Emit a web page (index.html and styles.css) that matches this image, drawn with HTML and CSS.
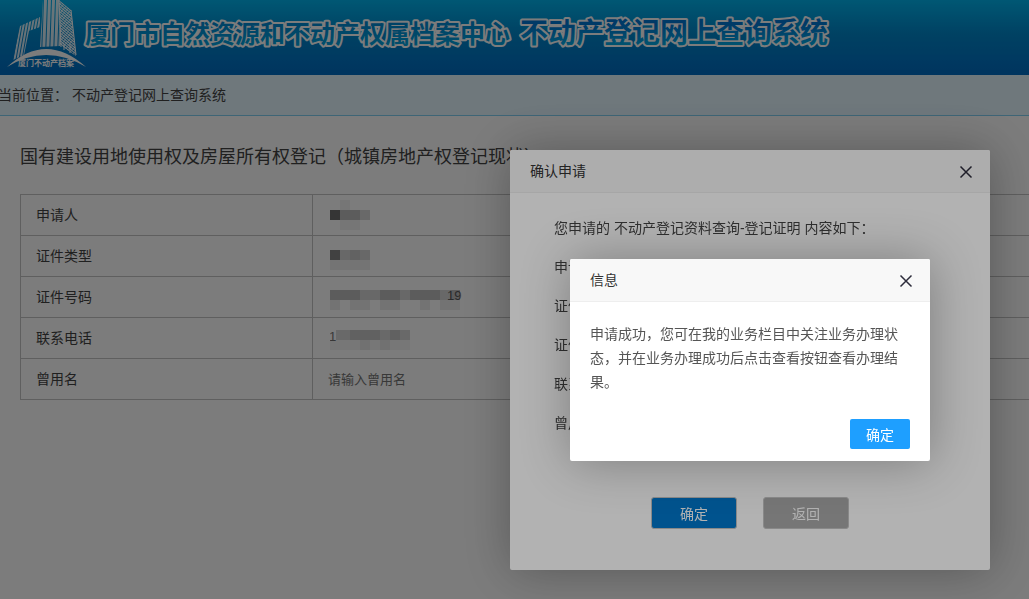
FILE: index.html
```html
<!DOCTYPE html>
<html lang="zh-CN">
<head>
  <meta charset="UTF-8">
  <meta name="viewport" content="width=device-width, initial-scale=1">
  <title>不动产登记网上查询系统</title>
  <link rel="stylesheet" href="styles.css">
</head>
<body>
<header class="header">
  <svg class="logo" width="840" height="75" viewBox="0 0 840 75">
    <defs>
      <pattern id="stripe" width="3" height="4" patternUnits="userSpaceOnUse" patternTransform="skewX(-10)">
        <rect width="2" height="4" fill="#fff" opacity=".85"/>
      </pattern>
      <pattern id="tower" width="4" height="4" patternUnits="userSpaceOnUse" patternTransform="skewX(-2)">
        <rect width="3" height="4" fill="#fff" opacity=".85"/>
      </pattern>
      <pattern id="hatch" width="3" height="2" patternUnits="userSpaceOnUse" patternTransform="rotate(40)">
        <rect width="3" height="1" fill="#fff"/>
        <rect width="1" height="2" fill="#fff" opacity=".6"/>
      </pattern>
      <linearGradient id="fillA" x1="0" y1="0" x2="0" y2="1">
        <stop offset="0" stop-color="#0085d0"/>
        <stop offset="1" stop-color="#00a5e0"/>
      </linearGradient>
      <linearGradient id="fillB" x1="0" y1="0" x2="0" y2="1">
        <stop offset="0.2" stop-color="#0078d4"/>
        <stop offset="1" stop-color="#00b4ea"/>
      </linearGradient>
    </defs>
    <path d="M13 60 L20 26 L40 17 V27 L29 31 L24 55 Z" fill="url(#stripe)"/>
    <path d="M40 47 L43 0 H59 L60 46 Z" fill="url(#tower)"/>
    <path d="M59 0 L71 10 L76 56 L60 45 Z" fill="url(#hatch)"/>
    <path d="M59 0 L61 47 M71 10 L76 55 M64 44 V50 M70 44 V53" stroke="#fff" fill="none"/>
    <path d="M7 67 Q46 31 86 67 Q46 43 7 67 Z" fill="#fff"/>
    <text class="logo-small" x="18" y="66">厦门不动产档案</text>
    <text class="logo-text logo-org" x="85" y="43" fill="url(#fillA)">厦门市自然资源和不动产权属档案中心</text>
    <text class="logo-text logo-system" x="520" y="43" fill="url(#fillB)">不动产登记网上查询系统</text>
  </svg>
</header>
<nav class="crumb">当前位置： <a href="#">不动产登记网上查询系统</a></nav>
<main>
  <h1>国有建设用地使用权及房屋所有权登记（城镇房地产权登记现状）</h1>
  <table class="form-table">
    <tr>
      <th scope="row">申请人</th>
      <td>
        <svg class="mask" width="140" height="40" viewBox="0 0 140 40">
          <path d="M10 5h10v10h-10z M10 25h20v10h-20z" opacity=".05"/>
          <path d="M0 15h10v10h-10z" opacity=".57"/>
          <path d="M10 15h20v10h-20z" opacity=".25"/>
          <path d="M30 15h10v10h-10z" opacity=".15"/>
        </svg>
      </td>
    </tr>
    <tr>
      <th scope="row">证件类型</th>
      <td>
        <svg class="mask" width="140" height="40" viewBox="0 0 140 40">
          <path d="M0 24h40v10h-40z" opacity=".06"/>
          <path d="M0 14h10v10h-10z" opacity=".47"/>
          <path d="M10 14h30v10h-30z" opacity=".16"/>
          <path d="M20 14h10v10h-10z" opacity=".05"/>
        </svg>
      </td>
    </tr>
    <tr>
      <th scope="row">证件号码</th>
      <td>
        <svg class="mask" width="140" height="40" viewBox="0 0 140 40">
          <text x="117" y="23">19</text>
          <path d="M0 23h10v10h-10z M20 23h20v10h-20z M50 23h20v10h-20z M90 23h10v10h-10z M110 23h20v10h-20z" opacity=".07"/>
          <path d="M0 13h130v10h-130z" opacity=".16"/>
          <path d="M0 13h30v10h-30z M50 13h20v10h-20z M80 13h30v10h-30z M120 13h10v10h-10z" opacity=".11"/>
        </svg>
      </td>
    </tr>
    <tr>
      <th scope="row">联系电话</th>
      <td>
        <svg class="mask" width="140" height="40" viewBox="0 0 140 40">
          <text x="-1" y="23">1</text>
          <path d="M0 22h80v10h-80z" opacity=".04"/>
          <path d="M30 22h10v10h-10z M50 22h10v10h-10z" opacity=".05"/>
          <path d="M6 12h74v10h-74z" opacity=".15"/>
          <path d="M20 12h30v10h-30z M60 12h10v10h-10z" opacity=".08"/>
        </svg>
      </td>
    </tr>
    <tr>
      <th scope="row"><label for="oldname">曾用名</label></th>
      <td><input type="text" id="oldname" placeholder="请输入曾用名"></td>
    </tr>
  </table>
</main>

<div class="shade"></div>
<div class="layer layer-apply" role="dialog" aria-labelledby="apply-title">
  <div class="layer-title">
    <h2 id="apply-title">确认申请</h2>
    <button type="button" class="close" aria-label="关闭">
      <svg width="14" height="14" viewBox="0 0 14 14"><path d="M1.5 1.5 L12.5 12.5 M12.5 1.5 L1.5 12.5"/></svg>
    </button>
  </div>
  <div class="apply-content">
    <p>您申请的 不动产登记资料查询-登记证明 内容如下：</p>
    <p>申请人：</p>
    <p>证件类型：</p>
    <p>证件号码：</p>
    <p>联系电话：</p>
    <p>曾用名：</p>
  </div>
  <div class="apply-btns">
    <button type="button" class="btn btn-ok">确定</button>
    <button type="button" class="btn btn-back">返回</button>
  </div>
</div>

<div class="shade"></div>
<div class="layer layer-msg" role="alertdialog" aria-labelledby="msg-title">
  <div class="layer-title">
    <h2 id="msg-title">信息</h2>
    <button type="button" class="close" aria-label="关闭">
      <svg width="14" height="14" viewBox="0 0 14 14"><path d="M1.5 1.5 L12.5 12.5 M12.5 1.5 L1.5 12.5"/></svg>
    </button>
  </div>
  <p class="msg-content">申请成功，您可在我的业务栏目中关注业务办理状态，并在业务办理成功后点击查看按钮查看办理结果。</p>
  <div class="msg-btns">
    <button type="button" class="btn-primary">确定</button>
  </div>
</div>
</body>
</html>
```

FILE: styles.css
```css
* { box-sizing: border-box; margin: 0; padding: 0; }
body {
  font-family: "Liberation Sans", "Noto Sans CJK SC", sans-serif;
  font-size: 14px;
  line-height: 24px;
  color: #444;
  background: #fff;
  min-height: 100vh;
  overflow: hidden;
}
button, input { font-family: inherit; }
button { cursor: pointer; }

.header {
  height: 75px;
  background: linear-gradient(#00b4ee, #0088cc 45%, #006cc4);
}
.logo { display: block; }
.logo-text {
  font-weight: bold;
  stroke: #fff;
  stroke-width: 4px;
  stroke-linejoin: round;
  paint-order: stroke;
}
.logo-org { font-size: 25px; }
.logo-system { font-size: 28px; }
.logo-small {
  font-size: 8px;
  font-weight: bold;
  fill: #fff;
}

.crumb {
  height: 41px;
  line-height: 40px;
  text-indent: -2px;
  background: #e4f6ff;
  border-bottom: 1px solid #80d0f4;
}
.crumb a { color: #444; text-decoration: none; }

main { padding: 28px 0 0 20px; }
h1 {
  font-size: 18px;
  font-weight: normal;
  line-height: 26px;
  margin-bottom: 24px;
}
.form-table {
  width: calc(100% + 20px);
  table-layout: fixed;
  border-collapse: collapse;
}
.form-table th, .form-table td {
  height: 41px;
  border: 1px solid #c4c4c4;
  text-align: left;
  font-weight: normal;
}
.form-table th { width: 292px; padding-left: 15px; }
.form-table td { padding-left: 15px; }
.form-table input {
  display: block;
  width: 200px;
  height: 30px;
  border: 0;
  font-size: 13px;
  background: none;
}
.form-table input::placeholder { color: #757575; }
.mask { display: block; margin-left: 2px; font-size: 13px; }
.mask text { fill: #777; }

.shade {
  position: fixed;
  top: 0;
  left: 0;
  right: 0;
  bottom: 0;
  background: rgba(0, 0, 0, .3);
}
.layer {
  position: fixed;
  background: #fff;
  border-radius: 2px;
  box-shadow: 1px 1px 50px rgba(0, 0, 0, .3);
}
.layer-apply { top: 150px; right: 39px; width: 480px; }
.layer-msg { top: 259px; right: 99px; width: 360px; }
.layer-title {
  display: flex;
  align-items: center;
  justify-content: space-between;
  height: 43px;
  padding: 0 17px 0 20px;
  background: #f8f8f8;
  border-bottom: 1px solid #eee;
  border-radius: 2px 2px 0 0;
}
.layer-title h2 { font-size: 14px; font-weight: normal; color: #333; }
.close {
  display: flex;
  padding-top: 2px;
  background: none;
  border: 0;
}
.close path { stroke: #2d2c3b; stroke-width: 1.5; fill: none; }

.apply-content { padding: 16px 44px 0; line-height: 39px; }
.apply-btns {
  display: flex;
  justify-content: center;
  gap: 26px;
  padding: 54px 0 41px;
}
.btn {
  width: 86px;
  height: 32px;
  border: 1px solid #c4c4c4;
  border-radius: 3px;
  font-size: 14px;
  color: #fff;
}
.btn-ok { background: #0078cc; }
.btn-back { background: #aaa; }

.msg-content { padding: 20px; color: #555; }
.msg-btns { text-align: right; padding: 5px 20px 12px; }
.btn-primary {
  display: inline-block;
  vertical-align: top;
  width: 60px;
  height: 30px;
  border: 0;
  border-radius: 2px;
  font-size: 14px;
  color: #fff;
  background: #1e9fff;
}
```
